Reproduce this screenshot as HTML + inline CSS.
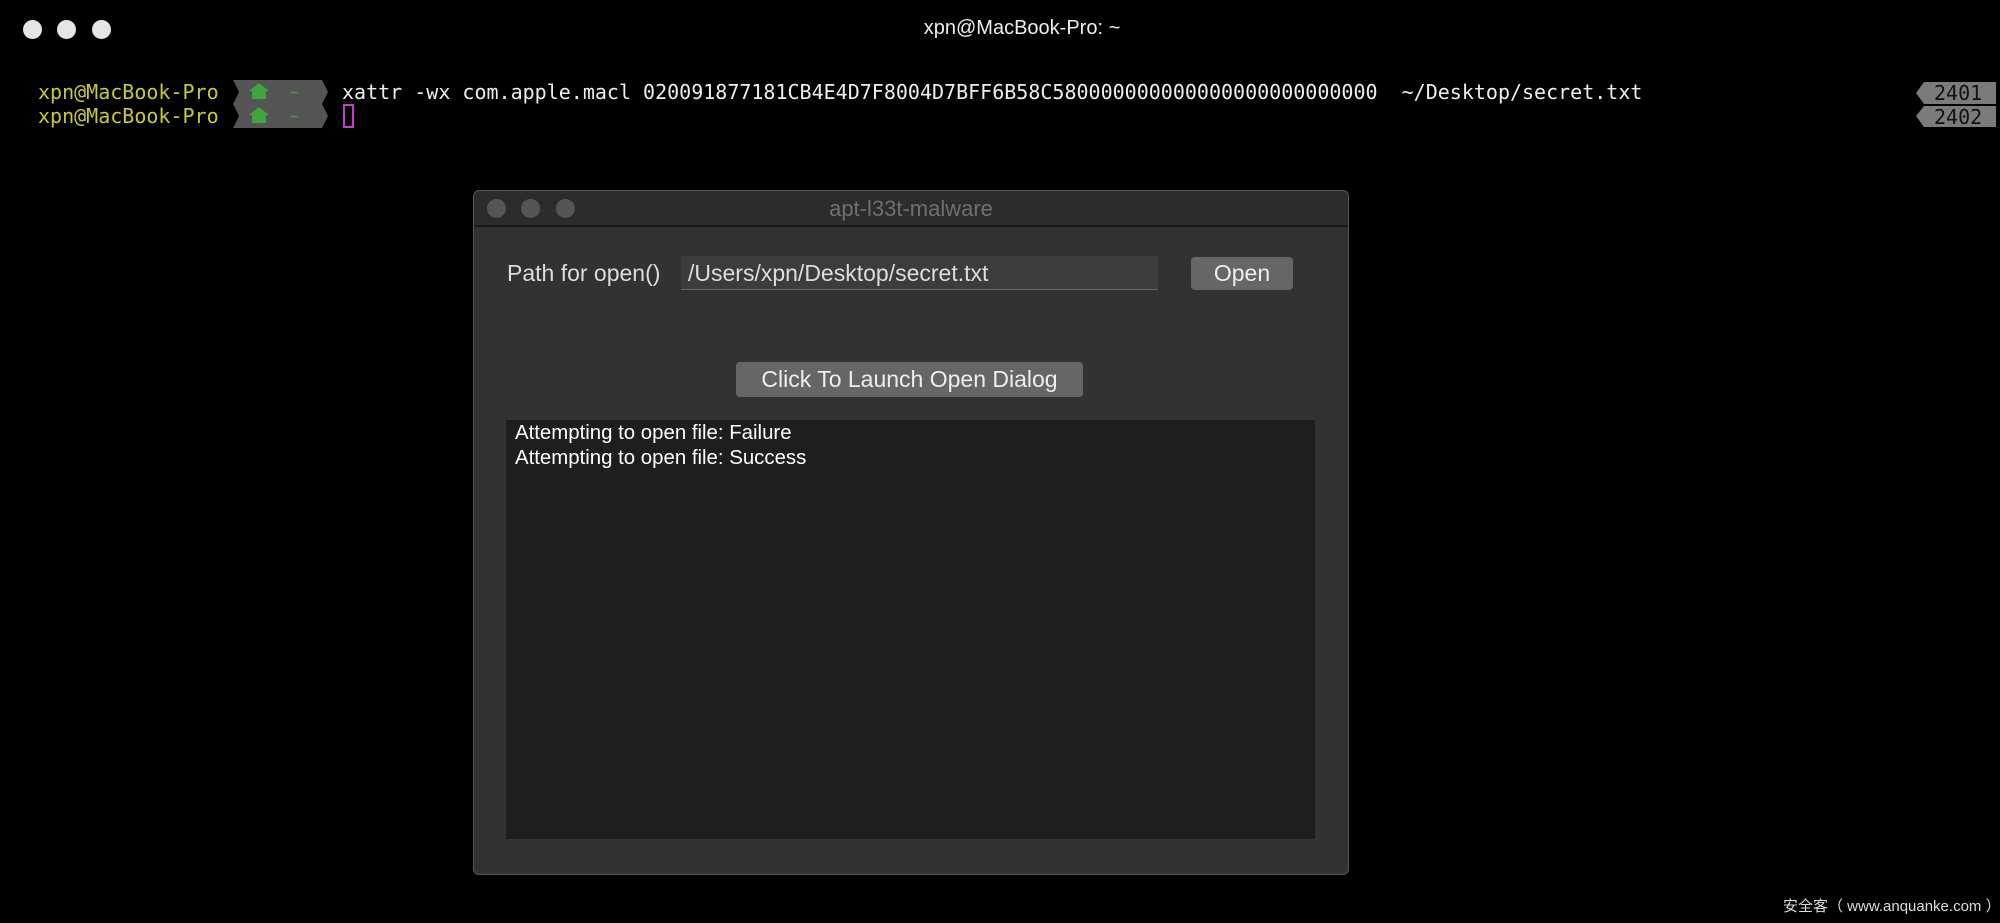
<!DOCTYPE html>
<html><head><meta charset="utf-8"><style>
*{margin:0;padding:0;box-sizing:border-box}
body{width:2000px;height:923px;background:#000;position:relative;overflow:hidden;font-family:"Liberation Sans",sans-serif}
.a{position:absolute;white-space:pre}
.tl{position:absolute;width:19px;height:19px;border-radius:50%;background:#e6e6e6}
.g{position:absolute;width:19px;height:19px;border-radius:50%;background:#555}
.mono{font-family:"DejaVu Sans Mono","Liberation Mono",monospace;font-size:20px;line-height:24px}
</style></head><body>
<div class="tl" style="left:23px;top:20px"></div>
<div class="tl" style="left:57px;top:20px"></div>
<div class="tl" style="left:92px;top:20px"></div>
<div class="a" style="left:0;width:2044px;text-align:center;top:17px;font-size:20px;color:#eee">xpn@MacBook-Pro: ~</div>

<div class="a mono" style="left:38px;top:80px;color:#c8c83c">xpn@MacBook-Pro</div>
<div class="a mono" style="left:38px;top:104px;color:#c8c83c">xpn@MacBook-Pro</div>
<svg class="a" style="left:230px;top:80px" width="100" height="48">
<polygon points="3,0 92,0 98,12 92,24 3,24 9,12" fill="#555"/>
<polygon points="3,24 92,24 98,36 92,48 3,48 9,36" fill="#555"/>
<polygon points="29,3 19,11 22,11 22,19 36,19 36,11 39,11" fill="#3fa63f"/>
<polygon points="29,27 19,35 22,35 22,43 36,43 36,35 39,35" fill="#3fa63f"/>
<text x="60" y="17" fill="#3fa63f" font-size="14" font-family="DejaVu Sans Mono">~</text>
<text x="60" y="41" fill="#3fa63f" font-size="14" font-family="DejaVu Sans Mono">~</text>
</svg>
<div class="a mono" style="left:342px;top:80px;color:#eee">xattr -wx com.apple.macl 020091877181CB4E4D7F8004D7BFF6B58C580000000000000000000000000  ~/Desktop/secret.txt</div>
<div class="a" style="left:343px;top:104px;width:11px;height:24px;border:2px solid #c33ccf"></div>
<svg class="a" style="left:1912px;top:80px" width="88" height="48">
<polygon points="12,2 84,2 84,24 12,24 4,13" fill="#7b7b7b"/>
<polygon points="12,26 84,26 84,47 12,47 4,36" fill="#7b7b7b"/>
<text x="22" y="20" font-size="20" fill="#111" font-family="DejaVu Sans Mono">2401</text>
<text x="22" y="44" font-size="20" fill="#111" font-family="DejaVu Sans Mono">2402</text>
</svg>

<div class="a" style="left:473px;top:190px;width:876px;height:685px;background:#323232;border:1px solid #555;border-radius:6px"></div>
<div class="a" style="left:474px;top:191px;width:874px;height:36px;background:#2c2c2c;border-bottom:2px solid #1a1a1a;border-radius:6px 6px 0 0"></div>
<div class="g" style="left:487px;top:199px"></div>
<div class="g" style="left:521px;top:199px"></div>
<div class="g" style="left:556px;top:199px"></div>
<div class="a" style="left:474px;width:874px;text-align:center;top:196px;font-size:22px;color:#6f6f6f">apt-l33t-malware</div>
<div class="a" style="left:507px;top:260px;font-size:23px;color:#ddd">Path for open()</div>
<div class="a" style="left:681px;top:256px;width:477px;height:34px;background:#3c3c3c;border-bottom:1px solid #666;color:#ddd;font-size:23px;padding:4px 7px">/Users/xpn/Desktop/secret.txt</div>
<div class="a" style="left:1191px;top:257px;width:102px;height:33px;background:#666;border-radius:4px;color:#eee;font-size:23px;text-align:center;line-height:33px">Open</div>
<div class="a" style="left:736px;top:362px;width:347px;height:35px;background:#666;border-radius:4px;color:#eee;font-size:23px;text-align:center;line-height:35px">Click To Launch Open Dialog</div>
<div class="a" style="left:506px;top:420px;width:809px;height:419px;background:#1e1e1e"></div>
<div class="a" style="left:515px;top:421px;font-size:20.4px;line-height:24.5px;color:#fff">Attempting to open file: Failure
Attempting to open file: Success</div>
<div class="a" style="left:1783px;top:895px;font-size:15px;color:#ddd;font-family:'Liberation Sans','Noto Sans CJK SC',sans-serif">安全客（ www.anquanke.com ）</div>
</body></html>
